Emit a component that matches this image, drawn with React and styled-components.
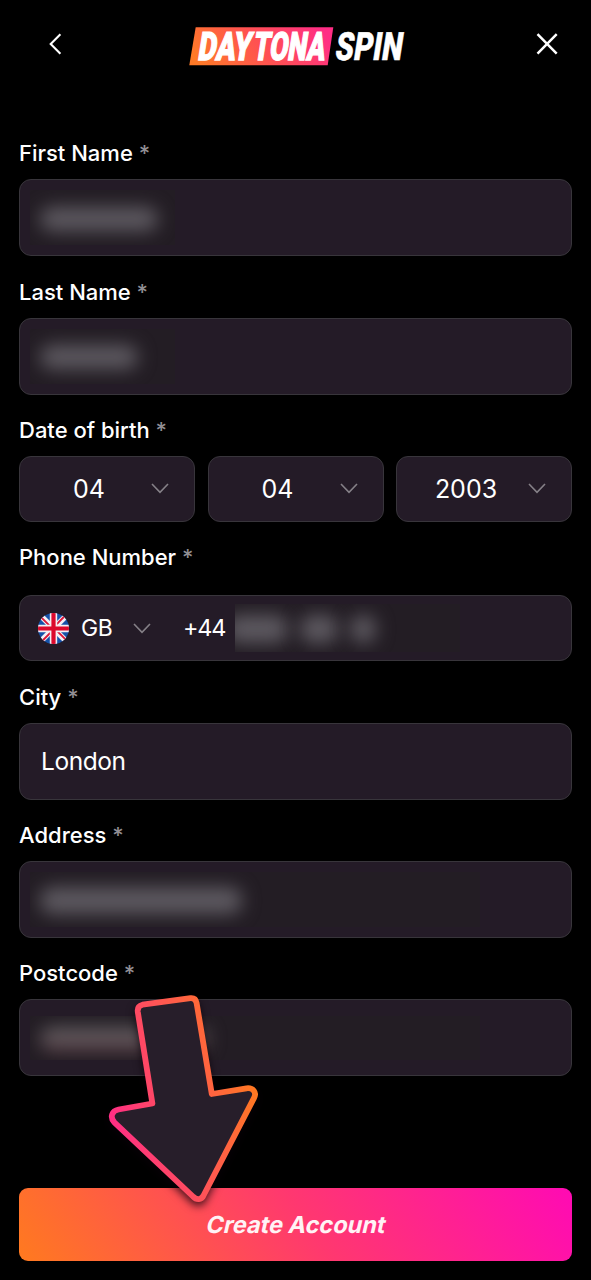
import React from "react";
import styled, { createGlobalStyle } from "styled-components";

const GlobalStyle = createGlobalStyle`
  * { box-sizing: border-box; }
  html, body { margin: 0; padding: 0; background: #000; }
  body { font-family: Inter, "Liberation Sans", sans-serif; color: #fff; }
`;

const Page = styled.main`
  position: relative;
  width: 591px;
  height: 1280px;
  overflow: hidden;
  background: #000;
  display: flex;
  flex-direction: column;
  padding: 0 19px 19px;
`;

const Header = styled.header`
  height: 88px;
  flex: none;
  display: flex;
  align-items: center;
  justify-content: space-between;
  padding: 0 10px 0 22px;
`;

const IconButton = styled.button`
  width: 30px;
  height: 30px;
  padding: 0;
  border: 0;
  background: none;
  display: block;
`;

const Logo = styled.svg`
  display: block;
  width: 224px;
  height: 48px;
  margin: 4px 6px 0 0;
  overflow: visible;
  font-family: Roboto, "Liberation Sans", sans-serif;
  font-weight: 900;
  font-size: 39px;
`;

const Form = styled.form`
  flex: 1;
  display: flex;
  flex-direction: column;
  gap: 21.3px;
  padding-top: 51.4px;
`;

const Field = styled.div`
  display: flex;
  flex-direction: column;
  gap: ${(p) => p.$gap || 12}px;
`;

const Label = styled.label`
  font-size: 22px;
  line-height: 28px;
  font-weight: 500;
  white-space: pre;
`;

const Star = styled.span`
  color: #918e93;
`;

const Box = styled.div`
  height: ${(p) => p.$h || 77}px;
  border: 1.5px solid #38353b;
  border-radius: 12px;
  background: #241b27;
  display: flex;
  align-items: center;
  overflow: hidden;
  font-size: 25px;
  line-height: 30px;
`;

const Selects = styled.div`
  display: grid;
  grid-template-columns: repeat(3, 1fr);
  gap: 12.5px;
`;

const SelectValue = styled.span`
  flex: 1;
  text-align: center;
  padding-left: 7px;
  font-size: 25px;
`;

const Chevron = styled.svg`
  flex: none;
  width: 18px;
  height: 11px;
  margin-right: ${(p) => p.$right || 0}px;
`;

const Value = styled.span`
  padding-left: 21px;
  font-size: 24.5px;
  letter-spacing: -0.45px;
`;

const Country = styled.span`
  width: 32px;
  margin-left: 12px;
  margin-right: 19.5px;
  font-size: 23px;
  letter-spacing: -0.3px;
`;

const Prefix = styled.span`
  width: 52px;
  margin-left: 32.5px;
  font-size: 23.5px;
  letter-spacing: -1.3px;
`;

const Flag = styled.svg`
  flex: none;
  width: 31px;
  height: 31px;
  margin-left: 18px;
`;

const Mask = styled.div`
  width: ${(p) => p.$w}px;
  height: ${(p) => p.$h || 55}px;
  margin-left: ${(p) => p.$left || 0}px;
  background: #231d24;
  overflow: hidden;
  display: flex;
  align-items: center;
  gap: 12px;
  padding-left: ${(p) => p.$inset ?? 10}px;
`;

const Smudge = styled.div`
  flex: none;
  width: ${(p) => p.$w}px;
  height: ${(p) => p.$h || 24}px;
  margin-top: 2px;
  margin-left: ${(p) => p.$shift || 0}px;
  border-radius: 12px;
  background: ${(p) => p.$fill || "#5d5960"};
  filter: blur(9px);
`;

const Submit = styled.button`
  flex: none;
  height: 72.6px;
  border: 0;
  border-radius: 9px;
  background: linear-gradient(55deg, #ff7a1f 0%, #ff386f 52%, #ff0ab4 100%);
  color: #fff3f5;
  font-family: Inter, "Liberation Sans", sans-serif;
  font-weight: 700;
  font-size: 23.5px;
  letter-spacing: 0;
  padding: 0 0 0 3px;
`;

const Slanted = styled.span`
  display: inline-block;
  transform: skewX(-13deg);
`;

const Pointer = styled.svg`
  position: absolute;
  left: 100px;
  top: 985px;
  width: 170px;
  height: 230px;
  overflow: visible;
  filter: drop-shadow(0 4px 4px rgba(10, 0, 8, 0.75));
`;

function Caption({ children }) {
  return (
    <Label>
      {children} <Star>*</Star>
    </Label>
  );
}

function Down({ right }) {
  return (
    <Chevron viewBox="0 0 18 11" $right={right} fill="none">
      <path d="M1 1 9 9.3 17 1" stroke="#858087" strokeWidth="1.6" />
    </Chevron>
  );
}

function Select({ value }) {
  return (
    <Box $h={66}>
      <SelectValue>{value}</SelectValue>
      <Down right={25} />
    </Box>
  );
}

function UKFlag() {
  return (
    <Flag viewBox="0 0 31 31">
      <clipPath id="round"><circle cx="15.5" cy="15.5" r="15.5" /></clipPath>
      <g clipPath="url(#round)">
        <path fill="#1552a8" d="M0 0h31v31H0z" />
        <path d="M2 2 29 29M29 2 2 29" stroke="#f4eff3" strokeWidth="5.4" />
        <path d="M3 4.2 12 13.2M28 26.8 19 17.8M26.8 3 17 12.8M4.2 28 14 18.2" stroke="#dc1738" strokeWidth="1.9" />
        <path d="M15.5 0v31M0 15.5h31" stroke="#f4eff3" strokeWidth="7.4" />
        <path d="M15.5 0v31M0 15.5h31" stroke="#dc0a2d" strokeWidth="4.2" />
      </g>
    </Flag>
  );
}

export default function App() {
  return (
    <Page>
      <GlobalStyle />
      <Header>
        <IconButton aria-label="Back">
          <svg width="30" height="30" fill="none">
            <path d="M19.4 5.2 9.7 15l9.7 9.8" stroke="#fff" strokeWidth="2.1" />
          </svg>
        </IconButton>
        <Logo viewBox="187 22 224 48" role="img" aria-label="Daytona Spin">
          <defs>
            <linearGradient id="plate" x1="0" y1="0.6" x2="1" y2="0.4">
              <stop offset="0" stopColor="#ff7a28" />
              <stop offset="0.5" stopColor="#ff5052" />
              <stop offset="1" stopColor="#ff2d85" />
            </linearGradient>
          </defs>
          <path d="M195.7 27.3h137.6l-5.6 38h-138.4z" fill="url(#plate)" />
          <g fill="#fff" stroke="#fff" strokeWidth="1.3">
            <text transform="translate(197 60) skewX(-9)" textLength="53" lengthAdjust="spacingAndGlyphs">DAY</text>
            <text transform="translate(252 60) skewX(-9)" textLength="72" lengthAdjust="spacingAndGlyphs">TONA</text>
          </g>
          <text fill="#fff" stroke="#fff" strokeWidth="0.5" transform="translate(334 60.3) skewX(-9)" textLength="67" lengthAdjust="spacingAndGlyphs">SPIN</text>
        </Logo>
        <IconButton aria-label="Close">
          <svg width="30" height="30" fill="none">
            <path d="m5.5 5.2 19.2 19.4M24.7 5.2 5.5 24.6" stroke="#fff" strokeWidth="2.5" />
          </svg>
        </IconButton>
      </Header>
      <Form>
        <Field>
          <Caption>First Name</Caption>
          <Box>
            <Mask $w={145} $left={10}><Smudge $w={118} /></Mask>
          </Box>
        </Field>
        <Field>
          <Caption>Last Name</Caption>
          <Box>
            <Mask $w={145} $left={10}><Smudge $w={98} /></Mask>
          </Box>
        </Field>
        <Field>
          <Caption>Date of birth</Caption>
          <Selects>
            <Select value="04" />
            <Select value="04" />
            <Select value="2003" />
          </Selects>
        </Field>
        <Field $gap={24.1}>
          <Caption>Phone Number</Caption>
          <Box $h={66}>
            <UKFlag />
            <Country>GB</Country>
            <Down />
            <Prefix>+44</Prefix>
            <Mask $w={225} $h={48} $inset={0}>
              <Smudge $w={62} $h={28} $shift={-9} />
              <Smudge $w={38} $h={28} />
              <Smudge $w={26} $h={28} />
            </Mask>
          </Box>
        </Field>
        <Field>
          <Caption>City</Caption>
          <Box><Value>London</Value></Box>
        </Field>
        <Field>
          <Caption>Address</Caption>
          <Box>
            <Mask $w={450} $left={10}><Smudge $w={202} $h={27} /></Mask>
          </Box>
        </Field>
        <Field>
          <Caption>Postcode</Caption>
          <Box>
            <Mask $w={450} $left={10} $h={44}>
              <Smudge $w={168} $fill="linear-gradient(#5f5b5e 40%, #5c3a43)" />
            </Mask>
          </Box>
        </Field>
      </Form>
      <Submit type="button"><Slanted>Create Account</Slanted></Submit>
      <Pointer viewBox="100 985 170 230">
        <defs>
          <linearGradient id="edge" gradientUnits="userSpaceOnUse" x1="110" y1="1125" x2="258" y2="1085">
            <stop offset="0" stopColor="#ff2d85" />
            <stop offset="0.5" stopColor="#ff5555" />
            <stop offset="1" stopColor="#ff7a1f" />
          </linearGradient>
        </defs>
        <path
          d="M142.5 1004.7 190.5 998.1Q195.7 997.6 196.6 1003L211.8 1094 246.5 1088.3C253 1087.5 257 1092.5 254 1098L203.5 1195.5C201.5 1200 196.5 1200.3 193 1196.5L114.3 1122.3C109.5 1117 112 1110.7 118.5 1109.5L152.4 1103.5 137.8 1012Q137 1006 142.5 1004.7Z"
          fill="#271e2a"
          stroke="url(#edge)"
          strokeWidth="5.8"
          strokeLinejoin="round"
        />
      </Pointer>
    </Page>
  );
}
